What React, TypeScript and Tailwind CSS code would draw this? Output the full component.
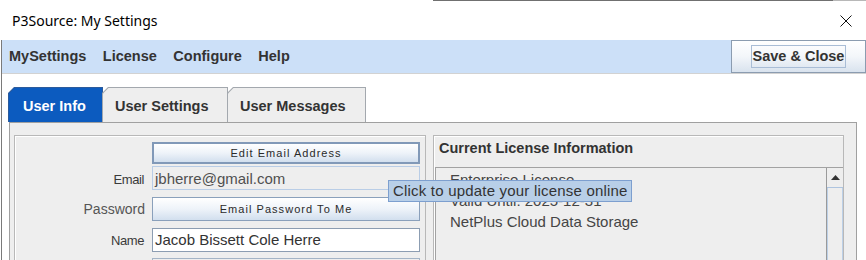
import React from "react";

function Tab({ label, selected, className }: { label: string; selected?: boolean; className: string }) {
  return (
    <div
      className={`h-[35px] pt-px px-px [clip-path:polygon(6px_0,100%_0,100%_100%,0_100%,0_6px)] ${
        selected ? "bg-[#2c5b9c]" : "bg-[#a3a8ae]"
      } ${className}`}
    >
      <div
        className={`h-full flex items-center pt-[3px] text-[14.5px] font-bold [clip-path:polygon(5.5px_0,100%_0,100%_100%,0_100%,0_5.5px)] ${
          selected ? "bg-[#0c5bbf] text-white pl-[14px]" : "bg-[#eeeeee] text-[#333] pl-[12px]"
        }`}
      >
        {label}
      </div>
    </div>
  );
}

function SmallButton({ label, focused }: { label: string; focused?: boolean }) {
  return (
    <div
      className={`w-[268px] flex items-center justify-center bg-gradient-to-b from-[#ffffff] via-[#eef3f9] to-[#d2dfee] text-[11px] tracking-[1.05px] text-[#2a2a2a] ${
        focused ? "h-[22px] border-2 border-[#8199b8]" : "h-[24px] border border-[#8aa0bb] pt-[1px]"
      }`}
    >
      {label}
    </div>
  );
}

export default function App() {
  return (
    <div className="w-[866px] h-[260px] overflow-hidden bg-white relative font-['Liberation_Sans',Arial,sans-serif]">
      {/* top edge */}
      <div className="flex h-px">
        <div className="w-[433px]" />
        <div className="w-[400px] bg-[#707070]" />
        <div className="flex-1 bg-[#b8b8b8]" />
      </div>
      {/* title bar */}
      <div className="h-[39px] flex items-center justify-between pl-[12px] pr-[14px]">
        <span className="font-['Noto_Sans',sans-serif] text-[14px] text-black">P3Source: My Settings</span>
        <svg width="12" height="12" viewBox="0 0 12 12">
          <path d="M0.5 0.5 L11.5 11.5 M11.5 0.5 L0.5 11.5" stroke="#111" strokeWidth="1" fill="none" />
        </svg>
      </div>

      <div className="ml-px border-l border-[#7a7a7a] h-[221px] flex flex-col">
        {/* menu bar */}
        <div className="h-[33px] bg-[#cce0f8] flex items-stretch shrink-0">
          <div className="flex items-center gap-[16.5px] pl-[7px] pt-[1px] text-[14.5px] font-bold text-[#333]">
            <span>MySettings</span>
            <span>License</span>
            <span>Configure</span>
            <span>Help</span>
          </div>
          <div className="ml-auto w-[135px] h-[33px] border border-[#8b9cb0] bg-gradient-to-b from-[#ffffff] via-[#f3f6fa] to-[#d9e3ee] pl-[19px] pt-[4px]">
            <div className="w-[95px] h-[23px] border border-[#a9bdd6] flex items-center justify-center text-[14.5px] font-bold text-[#333]">
              Save &amp; Close
            </div>
          </div>
        </div>
        <div className="h-px bg-[#d2d2d2] shrink-0" />
        <div className="h-[13px] shrink-0" />

        {/* tabs */}
        <div className="flex items-end ml-[6px] shrink-0">
          <Tab label="User Info" selected className="w-[95px]" />
          <Tab label="User Settings" className="w-[126px] -ml-px" />
          <Tab label="User Messages" className="w-[139px] -ml-px" />
        </div>

        {/* content panel */}
        <div className="ml-[7px] w-[848px] flex-1 border border-b-0 border-[#a0a0a0] bg-[#eeeeee] pl-[4px] pt-[12px] flex gap-[7px]">
          {/* left box */}
          <div className="w-[412px] h-[140px] border border-[#b8b8b8] shadow-[inset_1px_1px_0_#ffffff] flex flex-col">
            <div className="flex items-center mt-[6px]">
              <div className="w-[130px] shrink-0" />
              <div className="ml-[7px]">
                <SmallButton label="Edit Email Address" focused />
              </div>
            </div>
            <div className="flex items-center mt-[2px]">
              <div className="w-[130px] shrink-0 text-right text-[13px] tracking-[-0.4px] text-[#3a3a3a] pr-[1px] pt-[3px]">Email</div>
              <div className="ml-[7px] w-[268px] h-[24px] border border-[#b9cde6] bg-[#eeeeee] pl-[2px] pt-[3px] flex items-center text-[15px] text-[#505050]">
                jbherre@gmail.com
              </div>
            </div>
            <div className="flex items-center mt-[7px]">
              <div className="w-[130px] shrink-0 text-right text-[14px] text-[#555] pt-[1px]">Password</div>
              <div className="ml-[7px]">
                <SmallButton label="Email Password To Me" />
              </div>
            </div>
            <div className="flex items-center mt-[7px]">
              <div className="w-[130px] shrink-0 text-right text-[13px] tracking-[-0.4px] text-[#3a3a3a] pr-[1px] pt-[1px]">Name</div>
              <div className="ml-[7px] w-[268px] h-[24px] border border-[#8c9db2] bg-white pl-[2px] pt-[1px] flex items-center text-[15px] text-[#333]">
                Jacob Bissett Cole Herre
              </div>
            </div>
            <div className="flex items-center mt-[6px]">
              <div className="w-[130px] shrink-0" />
              <div className="ml-[7px] w-[268px] h-[24px] border border-[#a4b4c6] bg-[#eeeeee]" />
            </div>
          </div>

          {/* right box */}
          <div className="w-[411px] h-[140px] border border-[#b8b8b8] shadow-[inset_1px_1px_0_#ffffff] flex flex-col">
            <div className="h-[31px] shrink-0 pt-[2px] pl-[5px] text-[14.5px] font-bold text-[#333]">
              Current License Information
            </div>
            <div className="ml-px flex-1 border-t border-l border-[#a2a2a2] flex">
              <div className="flex-1 pl-[14px] pt-[1px] text-[15px] leading-[21px] text-[#454545]">
                <div>Enterprise License</div>
                <div>Valid Until: 2025-12-31</div>
                <div>NetPlus Cloud Data Storage</div>
              </div>
              <div className="w-[17px] border-l border-[#9a9a9a] flex flex-col">
                <div className="h-[20px] border-b border-[#aec4df] flex items-center justify-center">
                  <svg width="9" height="5" viewBox="0 0 9 5">
                    <path d="M4.5 0 L9 5 L0 5 Z" fill="#333" />
                  </svg>
                </div>
                <div className="flex-1 border-l border-r border-[#bcd0e7]" />
              </div>
            </div>
          </div>
        </div>
      </div>

      {/* tooltip */}
      <div className="absolute left-[388px] top-[180px] w-[244px] h-[22px] bg-[#b8cfe8] border border-[#7d9fcf] pl-[4px] flex items-center text-[15px] tracking-[0.2px] text-[#333] whitespace-nowrap">
        Click to update your license online
      </div>
    </div>
  );
}
